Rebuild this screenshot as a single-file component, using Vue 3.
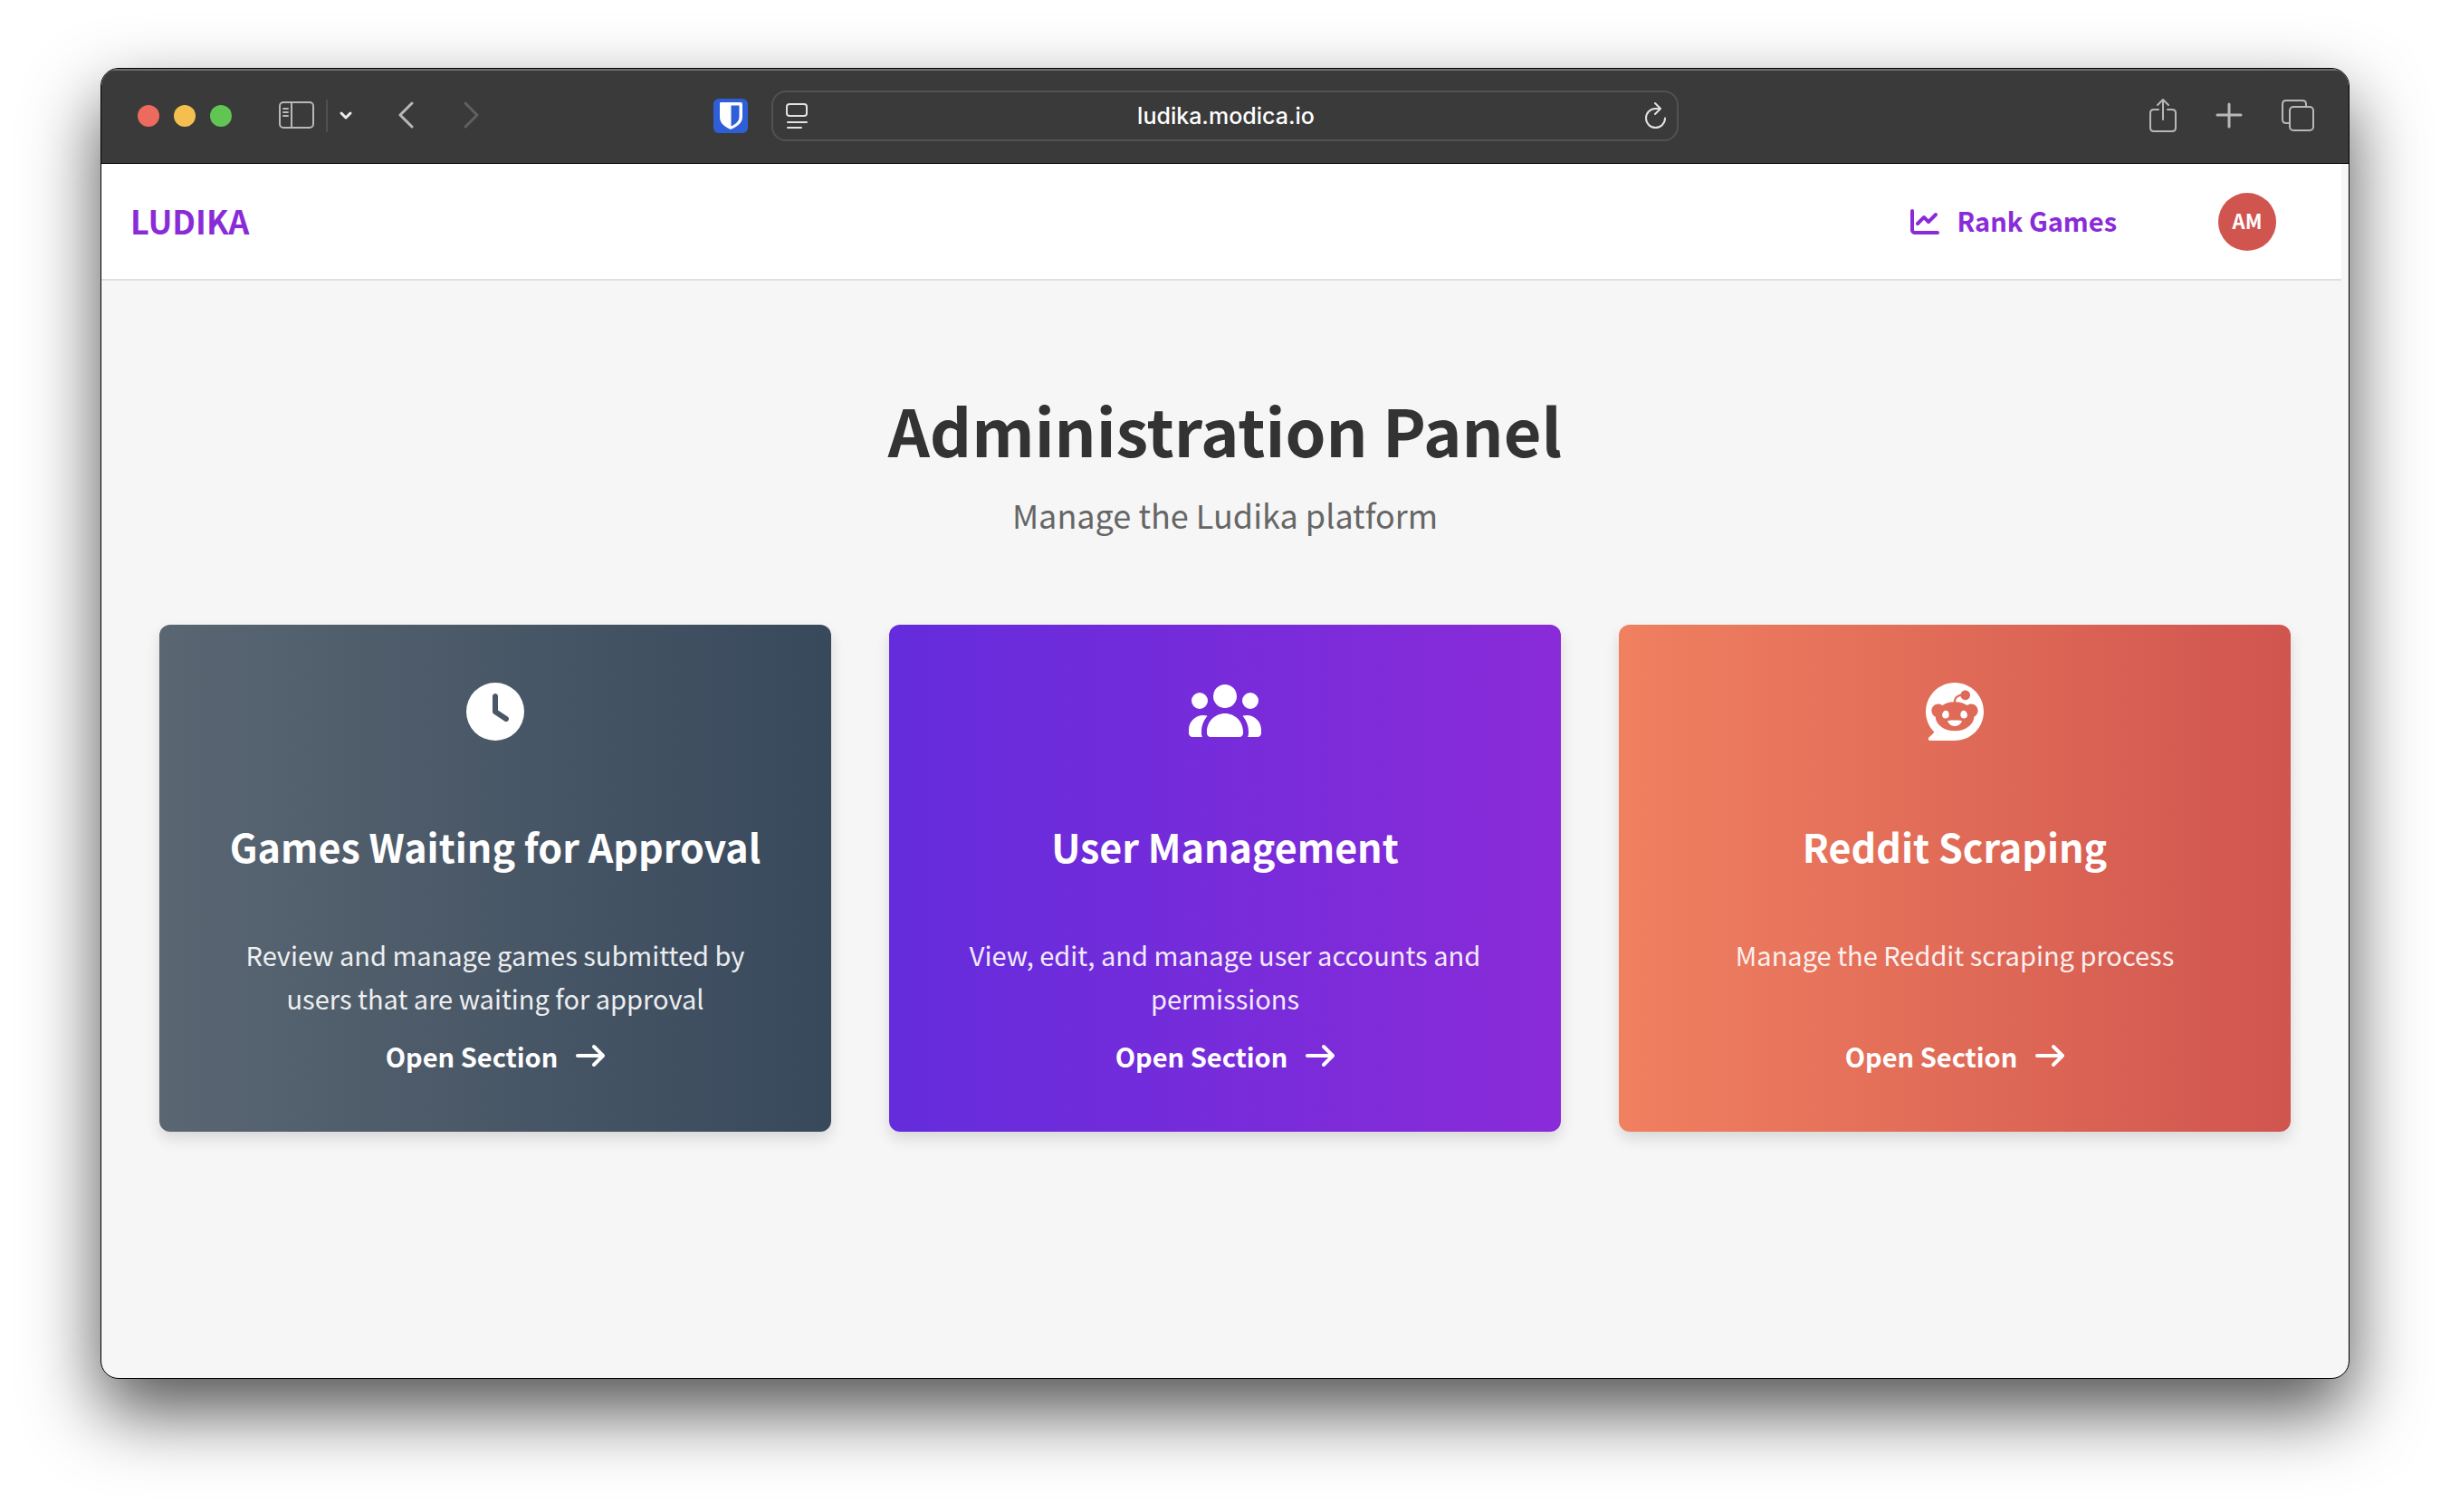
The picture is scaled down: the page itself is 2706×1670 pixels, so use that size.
<script setup>
const sections = [
  {
    id: 'approval',
    title: 'Games Waiting for Approval',
    text: 'Review and manage games submitted by users that are waiting for approval',
    viewBox: '0 0 512 512',
    path: 'M256 0a256 256 0 1 1 0 512A256 256 0 1 1 256 0zM232 120V256c0 8 4 15.5 10.7 20l96 64c11 7.4 25.9 4.4 33.3-6.7s4.4-25.9-6.7-33.3L280 243.2V120c0-13.3-10.7-24-24-24s-24 10.7-24 24z'
  },
  {
    id: 'users',
    title: 'User Management',
    text: 'View, edit, and manage user accounts and permissions',
    viewBox: '0 0 640 512',
    path: 'M320 16a104 104 0 1 1 0 208 104 104 0 1 1 0-208zM96 88a72 72 0 1 1 0 144 72 72 0 1 1 0-144zM0 416c0-70.7 57.3-128 128-128 12.8 0 25.2 1.9 36.9 5.4-32.9 36.8-52.9 85.4-52.9 138.6l0 16c0 11.4 2.4 22.2 6.7 32L32 480c-17.7 0-32-14.3-32-32l0-32zm521.3 64c4.3-9.8 6.7-20.6 6.7-32l0-16c0-53.2-20-101.8-52.9-138.6 11.7-3.5 24.1-5.4 36.9-5.4 70.7 0 128 57.3 128 128l0 32c0 17.7-14.3 32-32 32l-86.7 0zM472 160a72 72 0 1 1 144 0 72 72 0 1 1-144 0zM160 432c0-88.4 71.6-160 160-160s160 71.6 160 160l0 16c0 17.7-14.3 32-32 32l-256 0c-17.7 0-32-14.3-32-32l0-16z'
  },
  {
    id: 'reddit',
    title: 'Reddit Scraping',
    text: 'Manage the Reddit scraping process',
    viewBox: '0 0 512 512',
    path: 'M0 256C0 114.6 114.6 0 256 0S512 114.6 512 256s-114.6 256-256 256L37.1 512c-13.7 0-20.5-16.5-10.9-26.2L75 437C28.7 390.7 0 326.7 0 256zM349.6 153.6c23.6 0 42.7-19.1 42.7-42.7s-19.1-42.7-42.7-42.7c-20.6 0-37.8 14.6-41.8 34c-34.5 3.7-61.4 33-61.4 68.4l0 .2c-37.5 1.6-71.8 12.3-99 29.1c-10.1-7.8-22.8-12.5-36.5-12.5c-33 0-59.8 26.8-59.8 59.8c0 24 14.1 44.6 34.4 54.1c2 69.4 77.6 125.2 170.6 125.2s168.7-55.9 170.6-125.3c20.2-9.6 34.1-30.2 34.1-54c0-33-26.8-59.8-59.8-59.8c-13.7 0-26.3 4.6-36.4 12.4c-27.4-17-62.1-27.7-100-29.1l0-.2c0-25.4 18.9-46.5 43.4-49.9l0 0c4.4 18.8 21.3 32.8 41.5 32.8zM177.1 246.9c16.7 0 29.5 17.6 28.5 39.3s-13.5 29.6-30.3 29.6s-31.4-8.8-30.4-30.5s15.4-38.3 32.1-38.3zm190.1 38.3c1 21.7-13.7 30.5-30.4 30.5s-29.3-7.9-30.3-29.6c-1-21.7 11.8-39.3 28.5-39.3s31.2 16.6 32.1 38.3zm-48.1 56.7c-10.3 24.6-34.6 41.9-63 41.9s-52.7-17.3-63-41.9c-1.2-2.9 .8-6.2 3.9-6.5c18.4-1.9 38.3-2.9 59.1-2.9s40.7 1 59.1 2.9c3.1 .3 5.1 3.6 3.9 6.5z'
  }
]
</script>

<template>
  <div class="desktop">
    <div class="window">
      <div class="toolbar">
        <div class="tools">
          <div class="lights">
            <button class="light red" aria-label="Close"></button>
            <button class="light yellow" aria-label="Minimise"></button>
            <button class="light green" aria-label="Zoom"></button>
          </div>
          <button class="tool sidebar" aria-label="Sidebar">
            <svg width="40" height="32" viewBox="0 0 40 32" fill="none" stroke="currentColor" stroke-width="2" stroke-linecap="round">
              <rect x="1" y="1" width="37" height="28" rx="4" />
              <path d="M14 1v28M5 8h5M5 12h5M5 16h5" />
            </svg>
          </button>
          <span class="divider"></span>
          <button class="tool menu" aria-label="Tab groups">
            <svg width="16" height="12" viewBox="0 0 16 12" fill="none" stroke="currentColor" stroke-width="3" stroke-linecap="round" stroke-linejoin="round">
              <path d="M3 3l5 5 5-5" />
            </svg>
          </button>
          <button class="tool" aria-label="Back">
            <svg width="20" height="32" viewBox="0 0 20 32" fill="none" stroke="currentColor" stroke-width="3" stroke-linecap="round" stroke-linejoin="round">
              <path d="M17 2L4 15l13 13" />
            </svg>
          </button>
          <button class="tool forward" aria-label="Forward">
            <svg width="20" height="32" viewBox="0 0 20 32" fill="none" stroke="currentColor" stroke-width="3" stroke-linecap="round" stroke-linejoin="round">
              <path d="M4 2l13 13L4 28" />
            </svg>
          </button>
          <button class="tool vault" aria-label="Password manager">
            <svg width="38" height="38" viewBox="0 0 38 38">
              <rect width="38" height="38" rx="6" fill="#2f5fd8" />
              <path d="M8 4h22q2 0 2 2v14c0 7-6 11-13 14C12 31 7 27 7 20V5q0-1 1-1z" fill="#fff" />
              <path d="M19.500 7.500h9V20c0 5-4 8-9 10.500z" fill="#2f5fd8" />
            </svg>
          </button>
        </div>

        <div class="address">
          <button class="tool bright" aria-label="Reader">
            <svg width="24" height="30" viewBox="0 0 24 30" fill="none" stroke="currentColor" stroke-width="2" stroke-linecap="round">
              <rect x="1" y="2" width="22" height="13" rx="3" />
              <path d="M2 22h21M2 28h15" />
            </svg>
          </button>
          <input class="url" type="text" aria-label="Address" value="ludika.modica.io" />
          <button class="tool bright" aria-label="Reload">
            <svg width="24" height="30" viewBox="0 0 24 30" fill="none" stroke="currentColor" stroke-width="2" stroke-linecap="round" stroke-linejoin="round">
              <path d="M23 17.500a10.500 10.500 0 1 1-10.500-10.500h5M12 1l6 6-6 6" />
            </svg>
          </button>
        </div>

        <div class="tools end">
          <button class="tool" aria-label="Share">
            <svg width="30" height="40" viewBox="0 0 30 40" fill="none" stroke="currentColor" stroke-width="2" stroke-linecap="round" stroke-linejoin="round">
              <path d="M10 13H5q-4 0-4 4v16q0 4 4 4h20q4 0 4-4V17q0-4-4-4h-5M15 24V2M9 8l6-6 6 6" />
            </svg>
          </button>
          <button class="tool" aria-label="New tab">
            <svg width="30" height="30" viewBox="0 0 30 30" fill="none" stroke="currentColor" stroke-width="3" stroke-linecap="round">
              <path d="M15 2v25M2 14h26" />
            </svg>
          </button>
          <button class="tool" aria-label="Tab overview">
            <svg width="36" height="36" viewBox="0 0 36 36" fill="none" stroke="currentColor" stroke-width="2" stroke-linejoin="round">
              <rect x="9" y="8" width="26" height="26" rx="4" />
              <path d="M9 26H5q-4 0-4-4V5q0-4 4-4h18q4 0 4 4v3" />
            </svg>
          </button>
        </div>
      </div>

      <header class="navbar">
        <a class="brand" href="#">LUDIKA</a>
        <nav class="nav">
          <a class="rank" href="#">
            <svg width="32" height="32" viewBox="0 0 512 512" fill="currentColor">
              <path d="M64 64c0-17.700-14.300-32-32-32S0 46.300 0 64V400c0 44.200 35.800 80 80 80H480c17.700 0 32-14.300 32-32s-14.300-32-32-32H80c-8.800 0-16-7.200-16-16V64zm406.600 86.600c12.500-12.500 12.500-32.800 0-45.300s-32.800-12.500-45.300 0L320 210.700l-57.400-57.400c-12.500-12.500-32.800-12.500-45.300 0l-112 112c-12.500 12.500-12.500 32.800 0 45.300s32.800 12.500 45.300 0L240 221.300l57.400 57.400c12.500 12.500 32.800 12.500 45.300 0l128-128z" />
            </svg>
            <span>Rank Games</span>
          </a>
          <button class="avatar">AM</button>
        </nav>
      </header>

      <main class="content">
        <h1>Administration Panel</h1>
        <p class="lead">Manage the Ludika platform</p>
        <div class="cards">
          <article v-for="s in sections" :key="s.id" class="card" :class="s.id">
            <svg class="symbol" :viewBox="s.viewBox" fill="currentColor" fill-rule="evenodd">
              <path :d="s.path" />
            </svg>
            <h2>{{ s.title }}</h2>
            <p>{{ s.text }}</p>
            <a class="open" href="#">
              <span>Open Section</span>
              <svg width="32" height="32" viewBox="0 0 512 512" fill="currentColor">
                <path d="M502.600 278.600c12.500-12.500 12.500-32.800 0-45.300l-160-160c-12.500-12.500-32.800-12.500-45.300 0s-12.500 32.800 0 45.300L402.700 224 32 224c-17.700 0-32 14.300-32 32s14.300 32 32 32l370.700 0-105.400 105.400c-12.500 12.500-12.500 32.800 0 45.300s32.800 12.500 45.300 0l160-160z" />
              </svg>
            </a>
          </article>
        </div>
      </main>
    </div>
  </div>
</template>

<style>
body {
  margin: 0;
  background: #fff;
}
</style>

<style scoped>
.desktop {
  box-sizing: border-box;
  min-height: 100vh;
  padding: 75px 111px 147px;
  display: flex;
  font-family: "Noto Sans CJK SC", "Noto Sans", sans-serif;
}
.window {
  flex: 1;
  min-width: 0;
  display: flex;
  flex-direction: column;
  overflow: hidden;
  border: 1px solid #000;
  border-radius: 20px;
  background: #f6f6f6;
  box-shadow: 0 36px 80px rgba(0, 0, 0, 0.68);
}
button {
  border: 0;
  padding: 0;
  background: none;
  font: inherit;
}
a {
  text-decoration: none;
}
svg {
  display: block;
  flex: none;
}

.toolbar {
  display: grid;
  grid-template-columns: 1fr minmax(300px, 1002px) 1fr;
  align-items: center;
  height: 104px;
  background: #3a3a3a;
  border-bottom: 1px solid #000;
  box-shadow: inset 0 2px 0 #6e6e6e;
}
.tools {
  display: flex;
  align-items: center;
  padding: 0 26px 0 40px;
}
.tools.end {
  justify-content: flex-end;
  gap: 43px;
  padding: 0 38px 0 0;
}
.lights {
  display: flex;
  gap: 16px;
  margin-right: 52px;
}
.light {
  width: 24px;
  height: 24px;
  border-radius: 50%;
}
.red { background: #ed6a5e; }
.yellow { background: #f5bf4f; }
.green { background: #61c554; }
.tool {
  color: #b8b8b8;
}
.divider {
  width: 2px;
  height: 36px;
  margin: 0 12px;
  background: #505050;
}
.menu {
  color: #eee;
  margin-right: 48px;
}
.forward {
  color: #606060;
  margin-left: 52px;
}
.vault {
  margin-left: auto;
}
.bright {
  color: #e2e2e2;
}
.address {
  box-sizing: border-box;
  display: flex;
  align-items: center;
  height: 56px;
  padding: 0 12px 0 14px;
  border: 2px solid #525252;
  border-radius: 16px;
}
.url {
  flex: 1;
  min-width: 0;
  border: 0;
  padding: 0;
  background: none;
  color: #fff;
  font: 500 25px/32px Inter, sans-serif;
  text-align: center;
}

.navbar {
  display: flex;
  justify-content: space-between;
  align-items: center;
  height: 127px;
  margin-right: 8px;
  padding: 0 72px 0 32px;
  background: #fff;
  border-bottom: 2px solid #e0e0e0;
}
.brand,
.rank span,
.avatar {
  padding-bottom: 4px;
}
.brand {
  color: #8a2bd8;
  font-size: 36px;
  font-weight: 700;
}
.nav {
  display: flex;
  align-items: center;
  gap: 112px;
}
.rank {
  display: flex;
  align-items: center;
  gap: 20px;
  color: #8a2bd8;
  font-size: 29px;
  font-weight: 700;
}
.avatar {
  width: 64px;
  height: 64px;
  border-radius: 50%;
  background: #d0554f;
  color: #fff;
  font-size: 22px;
  font-weight: 700;
}

.content {
  padding: 112px 64px 64px;
  text-align: center;
}
h1 {
  margin: 0 0 16px;
  color: #333;
  font-size: 72px;
  line-height: 104px;
  font-weight: 700;
}
.lead {
  margin: 0 0 96px;
  color: #666;
  font-size: 36px;
  line-height: 52px;
}
.cards {
  display: grid;
  grid-template-columns: repeat(3, minmax(0, 1fr));
  gap: 64px;
}
.card {
  display: flex;
  flex-direction: column;
  align-items: center;
  padding: 64px 64px 62px;
  border-radius: 12px;
  color: #fff;
  box-shadow: 0 8px 16px rgba(0, 0, 0, 0.12);
}
.approval { background: linear-gradient(90deg, #5a6672, #38495c); }
.users { background: linear-gradient(90deg, #642cdc, #8a2bd8); }
.reddit { background: linear-gradient(90deg, #f08060, #d0554f); }
.symbol {
  height: 64px;
}
h2 {
  margin: 80px 0 60px;
  font-size: 43px;
  line-height: 72px;
  font-weight: 700;
}
.card p {
  flex: 1;
  margin: 0 0 18px;
  font-size: 29px;
  line-height: 48px;
  opacity: 0.9;
}
.open {
  display: flex;
  align-items: center;
  gap: 20px;
  color: #fff;
  font-size: 29px;
  line-height: 44px;
  font-weight: 700;
}
</style>
